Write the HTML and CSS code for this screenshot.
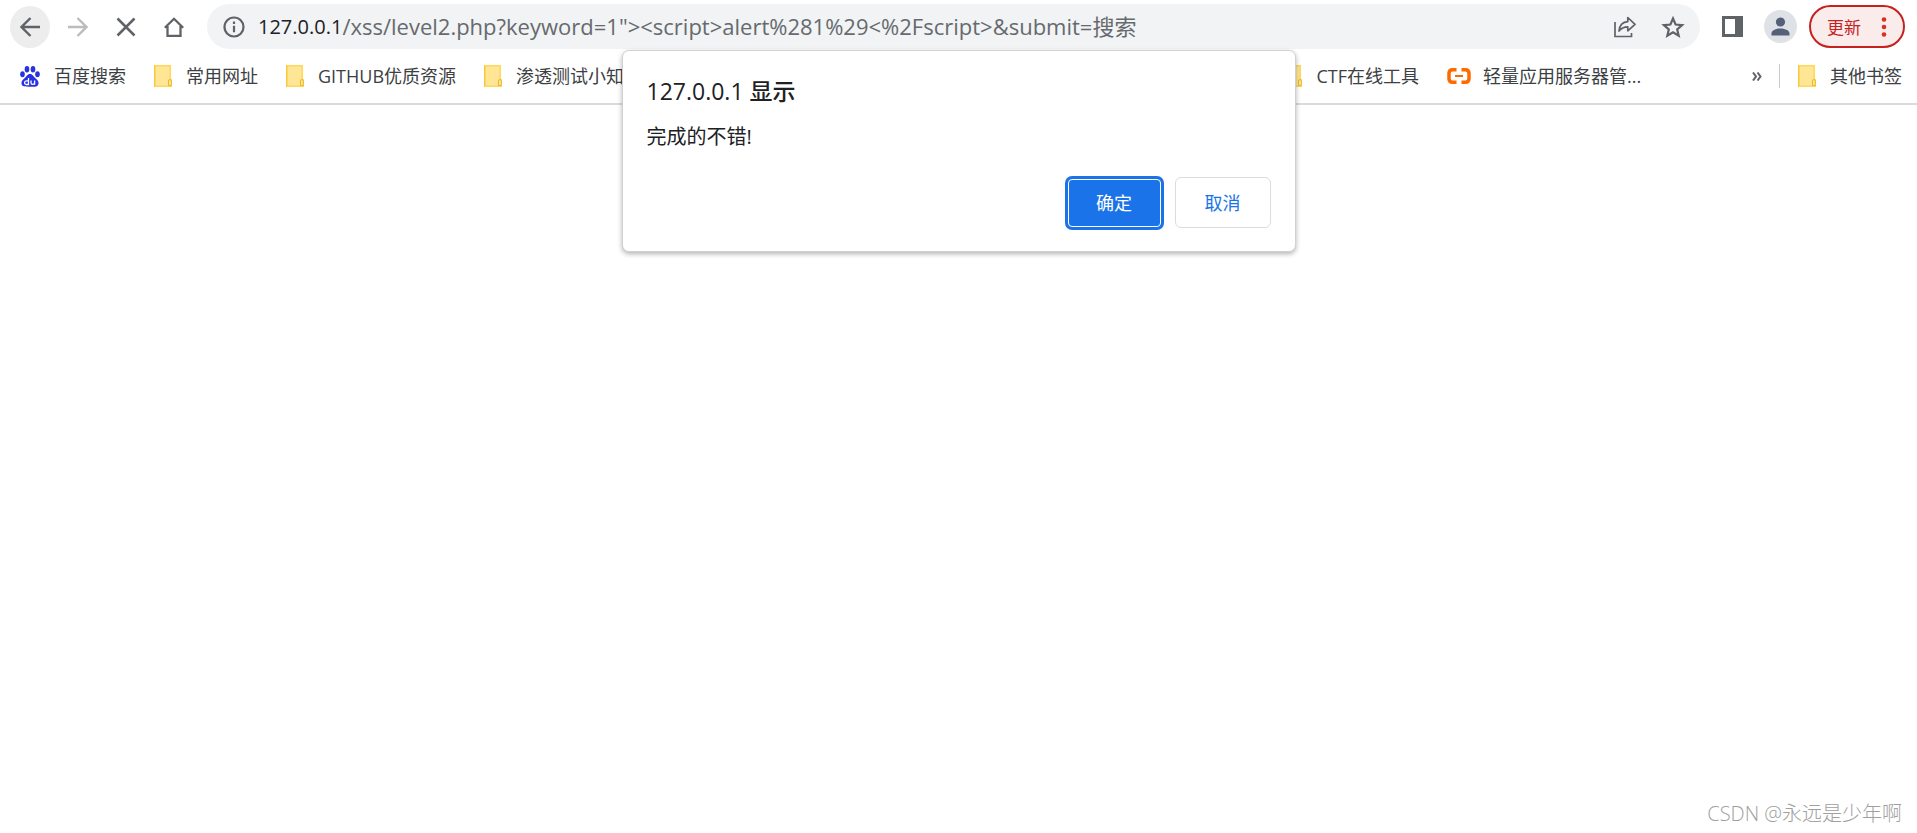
FILE: index.html
```html
<!DOCTYPE html>
<html lang="zh-CN">
<head>
    <meta charset="UTF-8">
    <meta name="viewport" content="width=device-width, initial-scale=1.0">
    <title>127.0.0.1</title>
    <link rel="stylesheet" href="styles.css">
</head>
<body>
    <!-- shared folder icon -->
    <svg class="symbols" aria-hidden="true">
        <symbol id="folder" viewBox="0 0 18 22">
            <path d="M0 0h17v14h1v8H0z" fill="#ffd75e"/>
            <path d="M2 1.500h13.500v12.500h-1v6.500H2z" fill="#ffe694"/>
            <path d="M0 0h1v22H0z" fill="#f3c843"/>
            <path d="M14.500 20.500v-4.500a1.400 1.400 0 0 1 2.800 0v4.500z" fill="#ffe694" stroke="#e8b92c"/>
        </symbol>
    </svg>

    <header class="browser">
        <div class="toolbar">
            <nav class="nav-buttons">
                <button type="button" class="icon-button active" aria-label="后退">
                    <svg width="20" height="20" viewBox="0 0 20 20"><path d="M20 10H2M10.500 1L1.500 10l9 9" fill="none" stroke="#5f6368" stroke-width="2.400"/></svg>
                </button>
                <button type="button" class="icon-button" aria-label="前进">
                    <svg width="20" height="20" viewBox="0 0 20 20"><path d="M0 10h18M9.500 1l9 9-9 9" fill="none" stroke="#babcbe" stroke-width="2.400"/></svg>
                </button>
                <button type="button" class="icon-button" aria-label="停止">
                    <svg width="20" height="20" viewBox="0 0 20 20"><path d="M1.500 1.500l17 17M18.500 1.500l-17 17" fill="none" stroke="#5f6368" stroke-width="2.500"/></svg>
                </button>
                <button type="button" class="icon-button" aria-label="主页">
                    <svg width="20" height="20" viewBox="0 0 20 20"><path d="M.8 10.800L10 1.800l9.200 9M3.500 9v9.800h13V9" fill="none" stroke="#5f6368" stroke-width="2.300"/></svg>
                </button>
            </nav>
            <div class="address-bar">
                <svg class="info" width="22" height="22" viewBox="0 0 22 22"><circle cx="11" cy="11" r="9.500" fill="none" stroke="#5f6368" stroke-width="2.200"/><path d="M11 9.700v6.500M11 5.500v2.400" stroke="#5f6368" stroke-width="2.200"/></svg>
                <label for="url">127.0.0.1</label>
                <input type="text" id="url" value="/xss/level2.php?keyword=1&quot;&gt;&lt;script&gt;alert%281%29&lt;%2Fscript&gt;&amp;submit=搜索">
                <button type="button" class="bar-button" aria-label="分享">
                    <svg width="24" height="24" viewBox="0 0 24 24"><path d="M2 7v14.500h16.500V18" fill="none" stroke="#5f6368" stroke-width="1.700"/><path d="M6 16c.6-5.500 3.500-9 8.800-9.300V2.500l7.200 6.800-7.200 6.500v-4C11 11.800 8.300 13 6 16z" fill="none" stroke="#5f6368" stroke-width="1.700" stroke-linejoin="round"/></svg>
                </button>
                <button type="button" class="bar-button" aria-label="收藏">
                    <svg width="24" height="24" viewBox="0 0 24 24"><path d="M12 3.500l2.600 6 6.500.600-4.900 4.300 1.500 6.400-5.700-3.400-5.700 3.400 1.500-6.400-4.900-4.300 6.500-.600z" fill="none" stroke="#5f6368" stroke-width="2.200"/></svg>
                </button>
            </div>
            <div class="tools">
                <button type="button" class="plain-button" aria-label="侧边栏">
                    <svg width="21" height="21" viewBox="0 0 21 21"><path d="M0 0h21v21H0zM3 3v15h10V3z" fill="#5f6368" fill-rule="evenodd"/></svg>
                </button>
                <button type="button" class="plain-button" aria-label="用户">
                    <svg width="33" height="33" viewBox="0 0 33 33"><circle cx="16.500" cy="16.500" r="16.500" fill="#dee1e6"/><circle cx="16.500" cy="12" r="4.600" fill="#546078"/><path d="M7.500 25.500v-2c0-3.600 5.500-5 9-5s9 1.400 9 5v2z" fill="#546078"/></svg>
                </button>
                <button type="button" class="update">
                    更新
                    <svg width="6" height="20" viewBox="0 0 6 20"><g fill="#d93025"><circle cx="3" cy="2.500" r="2.300"/><circle cx="3" cy="10" r="2.300"/><circle cx="3" cy="17.500" r="2.300"/></g></svg>
                </button>
            </div>
        </div>

        <nav class="bookmarks">
            <div class="group">
                <a href="#" class="bookmark">
                    <svg width="20" height="21" viewBox="0 0 20 21">
                        <g fill="#2932e1"><ellipse cx="2.500" cy="8.300" rx="2.300" ry="3"/><ellipse cx="7" cy="3.300" rx="2.300" ry="3.200"/><ellipse cx="13" cy="3.300" rx="2.300" ry="3.200"/><ellipse cx="17.500" cy="8.300" rx="2.300" ry="3"/><path d="M10 8c2.800 0 3.500 2.600 5.500 4.300 2 1.600 3.300 3 3 5.400-.4 3.200-3.500 3.300-8.500 3s-8.100.2-8.500-3c-.3-2.400 1-3.800 3-5.400C6.500 10.600 7.200 8 10 8z"/></g>
                        <path d="M8.500 12v6.500H6.300c-2.300 0-2.300-3.700 0-3.700h2.200M11 14.500v2.300c0 2.200 3.600 2.200 3.600 0v-2.300 4.300" fill="none" stroke="#fff" stroke-width="1.300"/>
                    </svg>
                    百度搜索
                </a>
                <a href="#" class="bookmark"><svg width="18" height="22"><use href="#folder"/></svg>常用网址</a>
                <a href="#" class="bookmark"><svg width="18" height="22"><use href="#folder"/></svg>GITHUB优质资源</a>
                <a href="#" class="bookmark"><svg width="18" height="22"><use href="#folder"/></svg>渗透测试小知</a>
            </div>
            <div class="group">
                <a href="#" class="bookmark"><svg width="18" height="22"><use href="#folder"/></svg>CTF在线工具</a>
                <a href="#" class="bookmark cloud">
                    <svg width="24" height="16" viewBox="0 0 24 16"><path d="M9.500 1.800H5.500A3.500 3.500 0 0 0 2 5v6a3.500 3.500 0 0 0 3.500 3.200h4M14.500 1.800h4A3.500 3.500 0 0 1 22 5v6a3.500 3.500 0 0 1-3.500 3.200h-4" fill="none" stroke="#ff6a00" stroke-width="3.500"/><path d="M8 8h8" stroke="#ff6a00" stroke-width="2"/></svg>
                    轻量应用服务器管...
                </a>
            </div>
            <div class="group other">
                <button type="button" class="plain-button" aria-label="更多书签">
                    <svg width="10" height="9" viewBox="0 0 10 9"><path d="M1 .5l3 4-3 4M5.500 .5l3 4-3 4" fill="none" stroke="#5f6368" stroke-width="2"/></svg>
                </button>
                <span class="separator"></span>
                <a href="#" class="bookmark"><svg width="18" height="22"><use href="#folder"/></svg>其他书签</a>
            </div>
        </nav>
    </header>

    <main class="page">
        <p class="watermark">CSDN @永远是少年啊</p>
    </main>

    <div class="dialog" role="alertdialog" aria-labelledby="dialog-title">
        <h1 id="dialog-title">127.0.0.1 <b>显示</b></h1>
        <p>完成的不错!</p>
        <div class="dialog-buttons">
            <button type="button" class="dialog-button ok">确定</button>
            <button type="button" class="dialog-button">取消</button>
        </div>
    </div>
</body>
</html>
```
FILE: styles.css
```css
* {
    box-sizing: border-box;
}

body {
    display: flex;
    flex-direction: column;
    min-height: 100vh;
    margin: 0;
    background-color: #fff;
    color: #202124;
    font-family: "Open Sans", "Noto Sans CJK SC", sans-serif;
    font-size: 18px;
}

button,
input {
    padding: 0;
    border: none;
    background: none;
    font: inherit;
}

button {
    cursor: pointer;
}

svg {
    display: block;
    flex: none;
}

.symbols {
    position: absolute;
    width: 0;
    height: 0;
}

.browser {
    border-bottom: 2px solid #dadada;
}

/* toolbar */
.toolbar {
    display: flex;
    align-items: center;
    padding: 4px 12px 0 10px;
}

.nav-buttons {
    display: flex;
    gap: 8px;
    margin-right: 13px;
}

.icon-button {
    display: flex;
    align-items: center;
    justify-content: center;
    width: 40px;
    height: 42px;
    border-radius: 50%;
}

.icon-button.active {
    background-color: #ededed;
}

.address-bar {
    display: flex;
    flex: 1;
    align-items: center;
    height: 45px;
    padding: 0 15px 0 16px;
    border-radius: 23px;
    background-color: #f1f3f4;
    font-size: 20px;
}

.info {
    margin-right: 13px;
}

.address-bar input {
    flex: 1;
    min-width: 0;
    padding-bottom: 3px;
    color: #666a6e;
    font-size: 22px;
    outline: none;
}

.bar-button {
    margin-left: 24px;
}

.tools {
    display: flex;
    align-items: center;
    gap: 12px;
    margin-left: 22px;
}

.plain-button:first-child {
    margin-right: 9px;
}

.update {
    display: flex;
    align-items: center;
    gap: 20px;
    height: 43px;
    padding: 0 16px;
    border: 2px solid #c5221f;
    border-radius: 22px;
    background-color: #faeceb;
    color: #c5221f;
    font-size: 17px;
}

/* bookmarks bar */
.bookmarks {
    display: grid;
    grid-template-columns: 67% 1fr auto;
    align-items: center;
    height: 54px;
}

.group {
    display: flex;
    align-items: center;
    gap: 28px;
}

.group:first-child {
    padding-left: 20px;
}

.bookmark {
    display: flex;
    align-items: center;
    gap: 14px;
    color: #3c4043;
    line-height: 22px;
    text-decoration: none;
    white-space: nowrap;
}

.cloud {
    gap: 12px;
}

.group.other {
    gap: 18px;
    padding-right: 15px;
}

.separator {
    width: 1px;
    height: 24px;
    margin-left: -10px;
    background-color: #c8cacc;
}

/* page */
.page {
    display: flex;
    flex: 1;
    align-items: flex-end;
    justify-content: flex-end;
    padding: 0 15px 5px;
}

.watermark {
    margin: 0;
    color: #a0a0a0;
    font-size: 20px;
    font-weight: 300;
    line-height: 28px;
}

/* alert dialog */
.dialog {
    position: absolute;
    top: 50px;
    right: 0;
    left: 0;
    width: 674px;
    margin: 0 auto;
    padding: 24px 24px 23px;
    border: 1px solid #d0d2d3;
    border-radius: 7px;
    background-color: #fff;
    box-shadow: 0 2px 5px rgba(0, 0, 0, 0.3);
}

.dialog h1 {
    margin: 0;
    font-size: 23px;
    font-weight: 400;
    line-height: 32px;
}

.dialog h1 b {
    font-weight: 500;
}

.dialog p {
    margin: 16px 0 26px;
    font-size: 20px;
    line-height: 28px;
}

.dialog-buttons {
    display: flex;
    align-items: center;
    justify-content: flex-end;
    gap: 14px;
}

.dialog-button {
    width: 96px;
    height: 51px;
    padding-bottom: 2px;
    border: 1px solid #dadce0;
    border-radius: 6px;
    color: #1a73e8;
}

.dialog-button.ok {
    width: 93px;
    height: 48px;
    border: 1px solid #fff;
    border-radius: 4px;
    background-color: #1a73e8;
    box-shadow: 0 0 0 3px #1a73e8;
    color: #fff;
}
```
